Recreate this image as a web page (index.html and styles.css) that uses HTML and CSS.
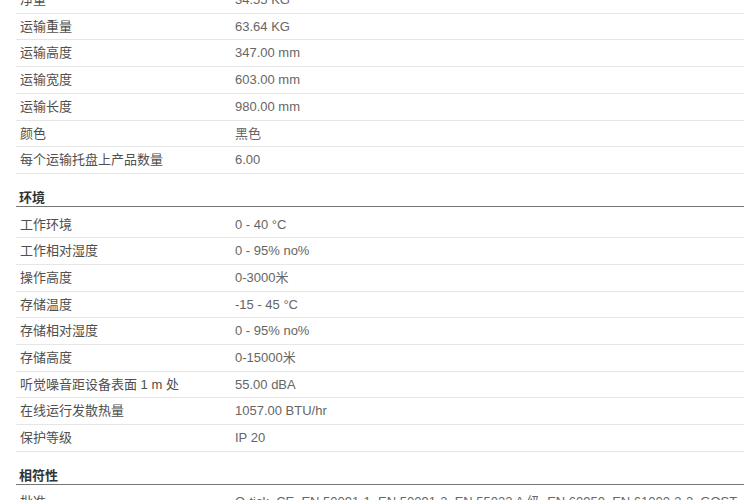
FILE: index.html
```html
<!DOCTYPE html>
<html lang="zh">
<head>
<meta charset="utf-8">
<title>技术规格</title>
<link rel="stylesheet" href="styles.css">
</head>
<body>
<div class="specs">
  <section class="group group-first">
    <div class="row"><div class="label">净重</div><div class="value">34.55 KG</div></div>
    <div class="row"><div class="label">运输重量</div><div class="value">63.64 KG</div></div>
    <div class="row"><div class="label">运输高度</div><div class="value">347.00 mm</div></div>
    <div class="row"><div class="label">运输宽度</div><div class="value">603.00 mm</div></div>
    <div class="row"><div class="label">运输长度</div><div class="value">980.00 mm</div></div>
    <div class="row"><div class="label">颜色</div><div class="value">黑色</div></div>
    <div class="row"><div class="label">每个运输托盘上产品数量</div><div class="value">6.00</div></div>
  </section>
  <section class="group">
    <h3 class="group-title">环境</h3>
    <div class="row"><div class="label">工作环境</div><div class="value">0 - 40 °C</div></div>
    <div class="row"><div class="label">工作相对湿度</div><div class="value">0 - 95% no%</div></div>
    <div class="row"><div class="label">操作高度</div><div class="value">0-3000米</div></div>
    <div class="row"><div class="label">存储温度</div><div class="value">-15 - 45 °C</div></div>
    <div class="row"><div class="label">存储相对湿度</div><div class="value">0 - 95% no%</div></div>
    <div class="row"><div class="label">存储高度</div><div class="value">0-15000米</div></div>
    <div class="row"><div class="label">听觉噪音距设备表面 1 m 处</div><div class="value">55.00 dBA</div></div>
    <div class="row"><div class="label">在线运行发散热量</div><div class="value">1057.00 BTU/hr</div></div>
    <div class="row"><div class="label">保护等级</div><div class="value">IP 20</div></div>
  </section>
  <section class="group">
    <h3 class="group-title">相符性</h3>
    <div class="row"><div class="label">批准</div><div class="value">Q-tick, CE, EN 50091-1, EN 50091-2, EN 55022 A 级, EN 60950, EN 61000-3-2, GOST, VDE</div></div>
  </section>
</div>
</body>
</html>
```
FILE: styles.css
```css
html, body {
  margin: 0;
  padding: 0;
  background: #ffffff;
}

body {
  font-family: "Liberation Sans", Arial, "Noto Sans CJK SC", sans-serif;
  font-size: 13px;
  color: #555555;
  overflow: hidden;
}

.specs {
  margin: -13px 6px 0 16px;
}

.group-title {
  margin: 15px 0 4.6px 0;
  padding: 0 0 0 3px;
  font-size: 13px;
  line-height: 17px;
  font-weight: bold;
  color: #333333;
  border-bottom: 1px solid #767676;
}

.row {
  display: grid;
  grid-template-columns: 215px 1fr;
  border-bottom: 1px solid #e6e6e6;
  line-height: 17.7px;
}

.label,
.value {
  padding: 4px 0 4px 4px;
}

.label {
  color: #4f4f4f;
}

.value {
  color: #666666;
}
```
